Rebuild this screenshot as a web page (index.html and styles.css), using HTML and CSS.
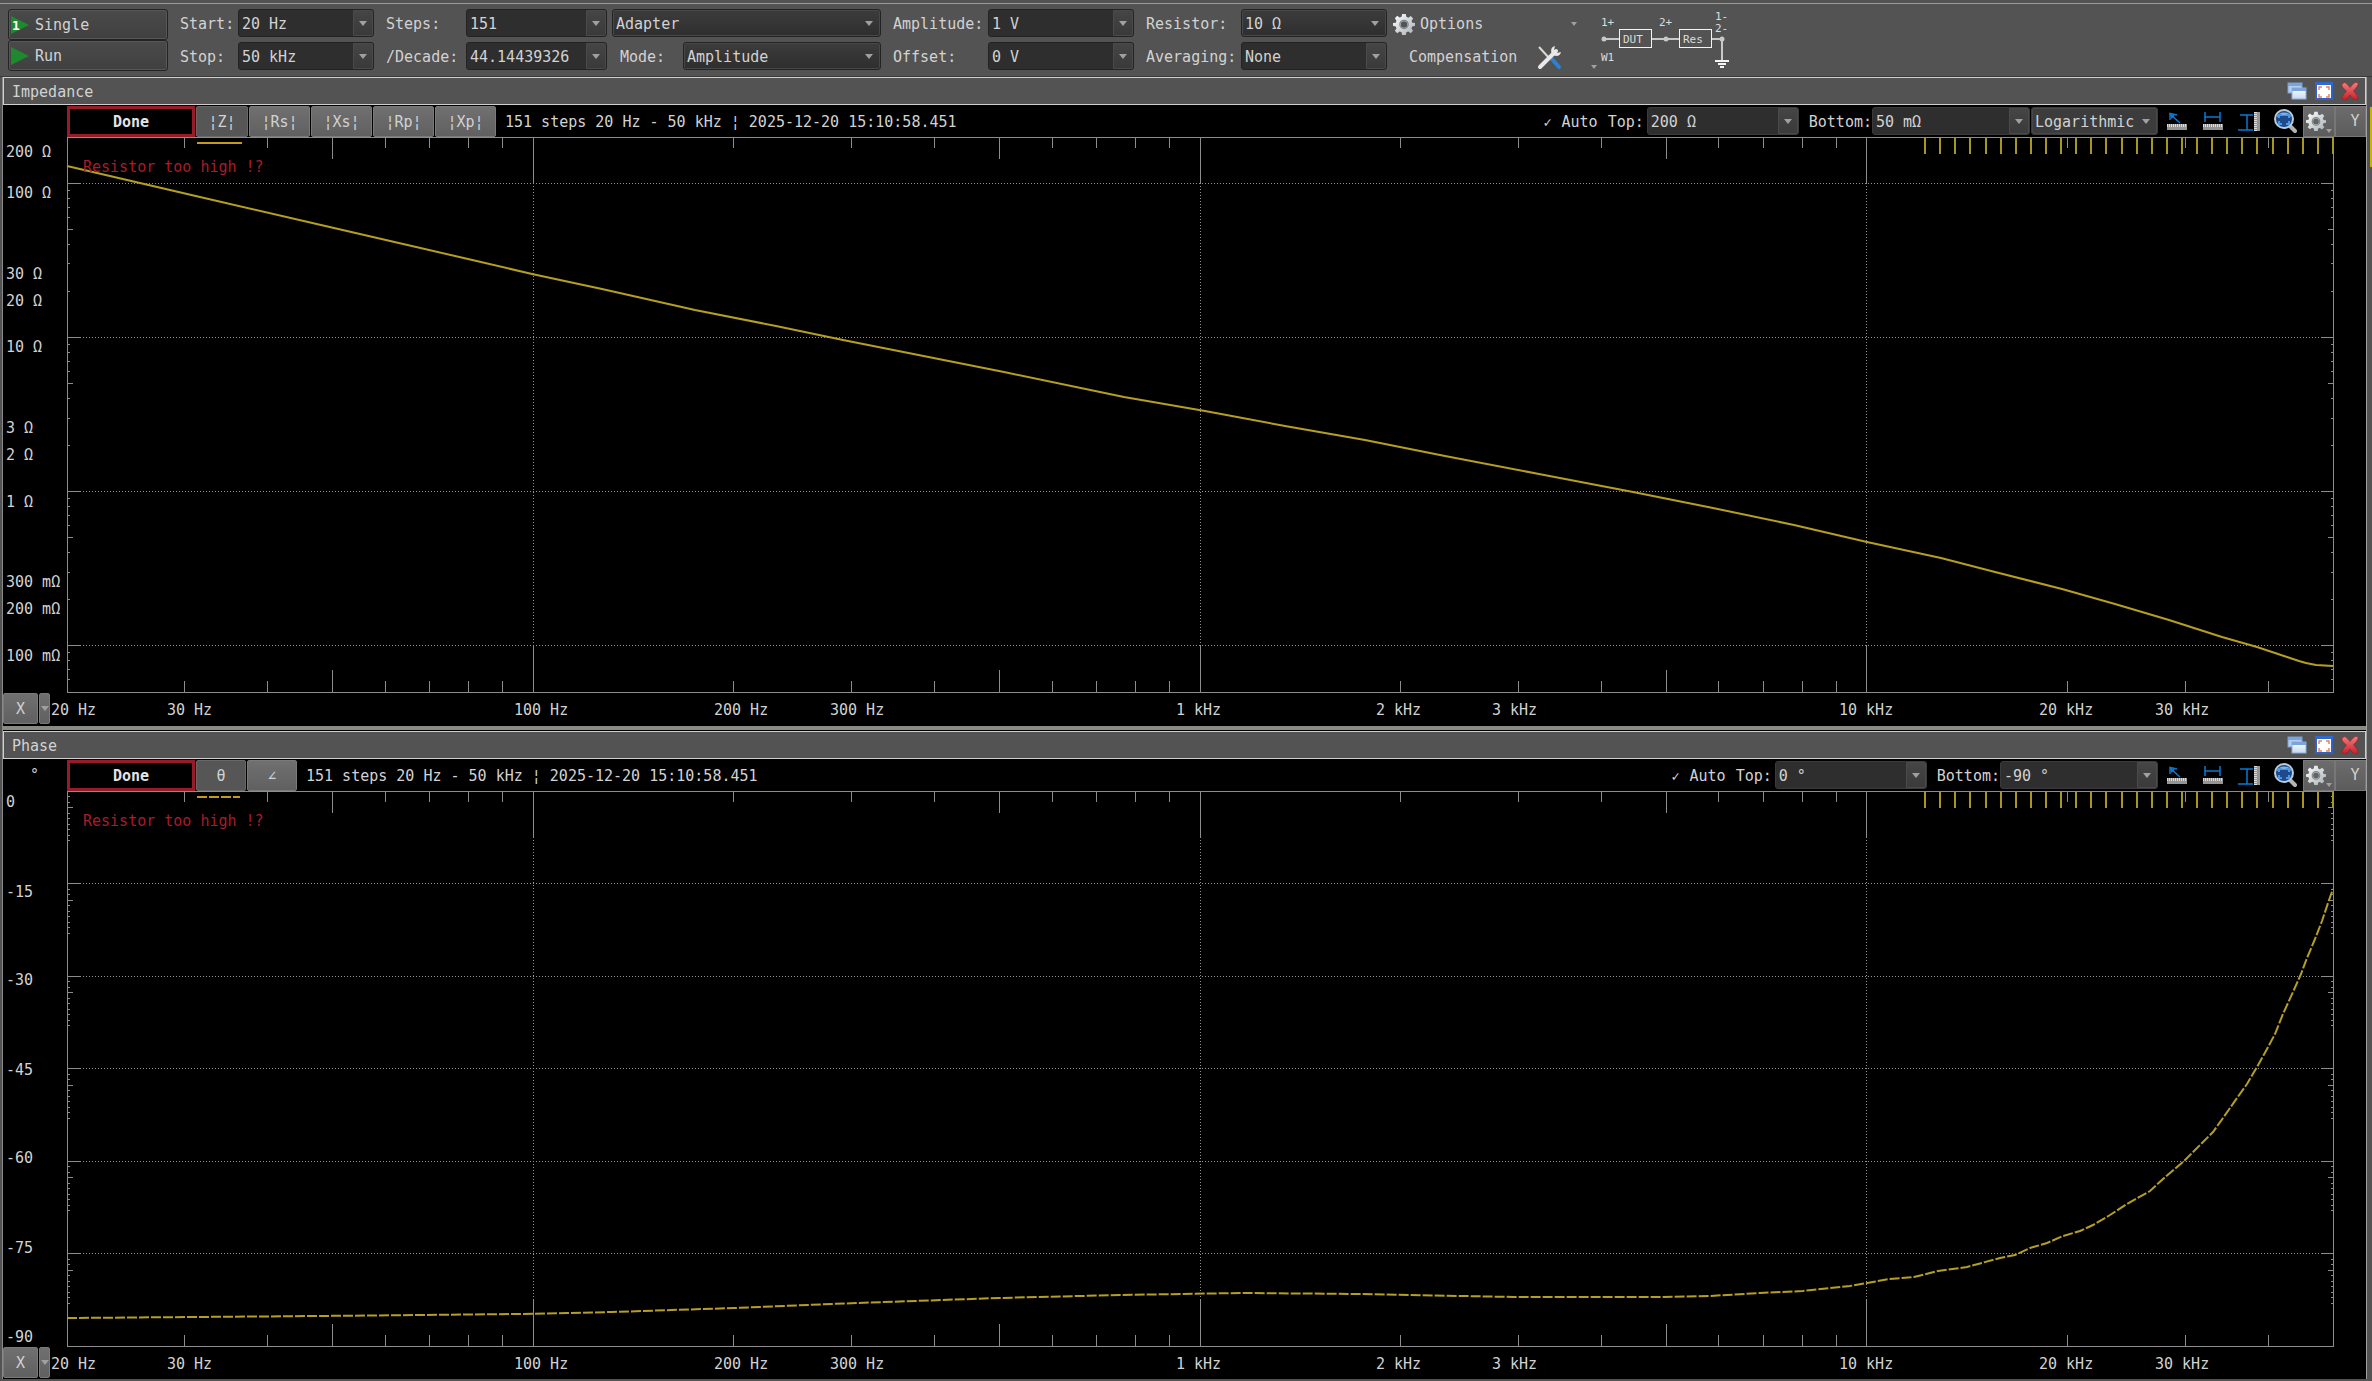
FILE: index.html
```
<!DOCTYPE html>
<html lang="en">
<head>
<meta charset="utf-8">
<title>Impedance Analyzer</title>
<link rel="stylesheet" href="styles.css">
</head>
<body>
<svg class="defs" aria-hidden="true">
  <defs>
    <linearGradient id="metal" x1="0" y1="0" x2="1" y2="1"><stop offset="0" stop-color="#ffffff"/><stop offset="1" stop-color="#a9b0b4"/></linearGradient>
    <linearGradient id="red" x1="0" y1="0" x2="0" y2="1"><stop offset="0" stop-color="#f08080"/><stop offset="1" stop-color="#c81e28"/></linearGradient>
    <linearGradient id="pane" x1="0" y1="0" x2="0" y2="1"><stop offset="0" stop-color="#ffffff"/><stop offset="1" stop-color="#c4d8f0"/></linearGradient>
    <symbol id="gear" viewBox="0 0 24 24">
      <path fill="url(#metal)" fill-rule="evenodd" d="M10 1h4l.6 3.200 2.100.9 2.700-1.900 2.600 2.800-1.800 2.600.9 2.100L24 11v3l-3 .7-.9 2.100 1.800 2.600-2.600 2.700-2.700-1.800-2 .8L14 24h-4l-.7-3-2-.8-2.700 1.800L2 19.400l1.800-2.600L3 14.700 0 14v-3l3-.5.800-2.100L2 5.800 4.600 3l2.700 2 2-.8zM12 9a3.500 3.500 0 1 0 0 7 3.500 3.500 0 0 0 0-7z"/>
      <circle cx="12" cy="12.500" r="4.500" fill="none" stroke="#7d868c" stroke-width="1.400"/>
    </symbol>
    <symbol id="restore" viewBox="0 0 20 18">
      <rect x="1" y="1" width="14" height="10" fill="#b4cbea" stroke="#7ba0d4"/>
      <rect x="1" y="1" width="14" height="3" fill="#7ba3dc"/>
      <rect x="5" y="6" width="14" height="11" fill="url(#pane)" stroke="#8fb0dc"/>
      <rect x="5" y="6" width="14" height="3" fill="#7ba3dc"/>
    </symbol>
    <symbol id="maximize" viewBox="0 0 18 18">
      <rect x="1" y="1" width="16" height="16" fill="#ffffff" stroke="#2f62c4" stroke-width="2"/>
      <rect x="0" y="0" width="18" height="3" fill="#2f6ad0"/>
      <path d="M4 8V5h3M11 5h3v3M14 12v3h-3M7 15H4v-3" fill="none" stroke="#e8825c" stroke-width="1.500"/>
    </symbol>
    <symbol id="close" viewBox="0 0 18 18">
      <path d="M1 2q3-3 5 0l3 3.500L12 2q3-3 5-1 1 2-4.500 8 5 5 4.500 8-2 2-5 0l-3-4-3 4q-3 2-5 0Q0 15 5.500 9 0 5 1 2z" fill="url(#red)" stroke="#a01820" stroke-width=".6"/>
    </symbol>
    <symbol id="cursor" viewBox="0 0 20 20">
      <path d="M3 3l10 9M3 9V2.500L10 4" fill="none" stroke="#0a78d0" stroke-width="1.500"/>
      <path d="M3 3l5 1.500L4.500 8z" fill="#0a78d0"/>
      <rect x="0" y="13" width="20" height="6" fill="#959595"/>
      <path d="M0 14.500h20" stroke="#dcdcdc" stroke-width="3" stroke-dasharray="1 1"/>
    </symbol>
    <symbol id="measure" viewBox="0 0 20 20">
      <path d="M2 1v10M17 1v10M2 6h15" fill="none" stroke="#0a78d0" stroke-width="1.500"/>
      <rect x="0" y="13" width="20" height="6" fill="#959595"/>
      <path d="M0 14.500h20" stroke="#dcdcdc" stroke-width="3" stroke-dasharray="1 1"/>
    </symbol>
    <symbol id="measure-y" viewBox="0 0 22 20">
      <path d="M2 4h13M0 19h15M9 4v15" fill="none" stroke="#0a78d0" stroke-width="1.500"/>
      <rect x="16" y="1" width="6" height="19" fill="#959595"/>
      <path d="M17.500 1v19" stroke="#dcdcdc" stroke-width="3" stroke-dasharray="1 1"/>
    </symbol>
    <symbol id="zoom" viewBox="0 0 24 24">
      <path d="M16 16l6 6" stroke="#b5b5b0" stroke-width="4" stroke-linecap="round"/>
      <circle cx="11" cy="10" r="9" fill="#1d4a8c" stroke="#b9cbd6" stroke-width="2"/>
      <path d="M3.500 8a8 7 0 0 1 15 0q-7-3-15 0z" fill="#7fb0e4"/>
      <path d="M6 9V6h3M13 6h3v3M16 12v3h-3M9 15H6v-3" fill="none" stroke="#4d97e6" stroke-width="2"/>
    </symbol>
  </defs>
</svg>

<div class="app">
  <form class="toolbar">
    <div class="run-buttons">
      <button type="button" class="run"><svg class="run-icon" viewBox="0 0 18 20"><path d="M0 1v18l18-9z" fill="#1e8a30"/><text x="1" y="15" class="run-one">1</text></svg>Single</button>
      <button type="button" class="run"><svg class="run-icon" viewBox="0 0 18 20"><path d="M0 1v18l18-9z" fill="#1e8a30"/></svg>Run</button>
    </div>
    <div class="fields fields-sweep">
      <label for="start">Start:</label>
      <div class="combo"><input id="start" value="20 Hz"><button type="button" aria-label="Start values"></button></div>
      <label for="stop">Stop:</label>
      <div class="combo"><input id="stop" value="50 kHz"><button type="button" aria-label="Stop values"></button></div>
    </div>
    <div class="fields fields-steps">
      <label for="steps">Steps:</label>
      <div class="combo"><input id="steps" value="151"><button type="button" aria-label="Step values"></button></div>
      <label for="decade">/Decade:</label>
      <div class="combo"><input id="decade" value="44.14439326"><button type="button" aria-label="Per decade values"></button></div>
    </div>
    <div class="fields fields-mode">
      <div class="drop wide"><select aria-label="Connection"><option>Adapter</option></select></div>
      <label for="mode">Mode:</label>
      <div class="drop"><select id="mode"><option>Amplitude</option></select></div>
    </div>
    <div class="fields fields-level">
      <label for="amplitude">Amplitude:</label>
      <div class="combo"><input id="amplitude" value="1 V"><button type="button" aria-label="Amplitude values"></button></div>
      <label for="offset">Offset:</label>
      <div class="combo"><input id="offset" value="0 V"><button type="button" aria-label="Offset values"></button></div>
    </div>
    <div class="fields fields-level">
      <label for="resistor">Resistor:</label>
      <div class="drop"><select id="resistor"><option>10 Ω</option></select></div>
      <label for="averaging">Averaging:</label>
      <div class="combo"><input id="averaging" value="None"><button type="button" aria-label="Averaging values"></button></div>
    </div>
    <div class="extras">
      <button type="button" class="flat options"><svg width="22" height="22"><use href="#gear"/></svg>Options<i class="arrow"></i></button>
      <button type="button" class="flat compensation">Compensation
        <svg width="26" height="26" viewBox="0 0 26 26"><path d="M2 3l11 12" stroke="#d8d8d8" stroke-width="2"/><path d="M14 14l8 9" stroke="#2f80d0" stroke-width="4" stroke-linecap="round"/><path d="M3 23L19 7" stroke="#e8e8e8" stroke-width="4" stroke-linecap="round"/><path d="M18 2a5 5 0 1 0 6 6l-4 1-3-3z" fill="#e8e8e8"/></svg>
        <i class="arrow low"></i></button>
    </div>
    <svg class="wiring" width="140" height="66" viewBox="0 6 140 66" role="img" aria-label="Wiring: W1 and 1+ to DUT, 2+, resistor, ground">
      <g fill="none" stroke="#c8c8c8" stroke-width="2">
        <path d="M4 36h15M51 36h28M111 36h11M122 36v21"/>
      </g>
      <g fill="none" stroke="#f4f4f4" stroke-width="1">
        <rect x="19.500" y="26.500" width="32" height="18"/><rect x="79.500" y="26.500" width="32" height="18"/>
      </g>
      <path d="M115 58h14M118 61h8M120 64h4" stroke="#f4f4f4" stroke-width="2"/>
      <g fill="#c8c8c8"><circle cx="4" cy="36" r="2.500"/><circle cx="66" cy="36" r="2.500"/><circle cx="122" cy="36" r="2.500"/></g>
      <g class="wiring-text">
        <text x="1" y="23">1+</text><text x="1" y="58">W1</text><text x="59" y="23">2+</text>
        <text x="23" y="40">DUT</text><text x="83" y="40">Res</text><text x="115" y="17">1-</text><text x="115" y="29">2-</text>
      </g>
    </svg>
  </form>

  <div class="main">
    <div class="panels">
      <section class="panel">
        <header class="title"><h2>Impedance</h2>
          <button type="button" aria-label="Restore"><svg width="20" height="18"><use href="#restore"/></svg></button>
          <button type="button" aria-label="Maximize"><svg width="18" height="18"><use href="#maximize"/></svg></button>
          <button type="button" aria-label="Close"><svg width="18" height="18"><use href="#close"/></svg></button>
        </header>
        <div class="head">
          <span class="unit"></span>
          <strong class="state">Done</strong>
          <button type="button" class="trace modulus on">¦Z¦</button><button type="button" class="trace pair">¦Rs¦</button><button type="button" class="trace pair">¦Xs¦</button><button type="button" class="trace pair">¦Rp¦</button><button type="button" class="trace pair">¦Xp¦</button>
          <span class="info">151 steps 20 Hz - 50 kHz ¦ 2025-12-20 15:10:58.451</span>
          <label class="auto"><input type="checkbox" checked>Auto</label>
          <label for="z-top">Top:</label>
          <div class="combo top"><input id="z-top" value="200 Ω"><button type="button" aria-label="Top values"></button></div>
          <label for="z-bottom">Bottom:</label>
          <div class="combo bottom"><input id="z-bottom" value="50 mΩ"><button type="button" aria-label="Bottom values"></button></div>
          <div class="drop scale"><select aria-label="Scale"><option>Logarithmic</option></select></div>
          <div class="tools">
            <button type="button" aria-label="Cursor"><svg width="20" height="20"><use href="#cursor"/></svg></button>
            <button type="button" aria-label="X measure"><svg width="20" height="20"><use href="#measure"/></svg></button>
            <button type="button" aria-label="Y measure"><svg width="22" height="20"><use href="#measure-y"/></svg></button>
            <button type="button" aria-label="Zoom"><svg width="24" height="24"><use href="#zoom"/></svg></button>
            <button type="button" class="raised" aria-label="Settings"><svg width="20" height="20"><use href="#gear"/></svg><i class="arrow"></i></button>
            <button type="button" class="raised y">Y</button>
          </div>
        </div>
        <div class="plot">
          <svg data-chart="impedance" role="img" aria-label="Impedance against frequency"></svg>
          <div class="x-buttons"><button type="button">X</button><button type="button" class="narrow" aria-label="X options"><i class="arrow"></i></button></div>
        </div>
      </section>
      <div class="splitter"></div>
      <section class="panel">
        <header class="title"><h2>Phase</h2>
          <button type="button" aria-label="Restore"><svg width="20" height="18"><use href="#restore"/></svg></button>
          <button type="button" aria-label="Maximize"><svg width="18" height="18"><use href="#maximize"/></svg></button>
          <button type="button" aria-label="Close"><svg width="18" height="18"><use href="#close"/></svg></button>
        </header>
        <div class="head">
          <span class="unit">°</span>
          <strong class="state">Done</strong>
          <button type="button" class="trace first on">θ</button><button type="button" class="trace first">∠</button>
          <span class="info">151 steps 20 Hz - 50 kHz ¦ 2025-12-20 15:10:58.451</span>
          <label class="auto"><input type="checkbox" checked>Auto</label>
          <label for="p-top">Top:</label>
          <div class="combo top"><input id="p-top" value="0 °"><button type="button" aria-label="Top values"></button></div>
          <label for="p-bottom">Bottom:</label>
          <div class="combo bottom"><input id="p-bottom" value="-90 °"><button type="button" aria-label="Bottom values"></button></div>
          <div class="tools">
            <button type="button" aria-label="Cursor"><svg width="20" height="20"><use href="#cursor"/></svg></button>
            <button type="button" aria-label="X measure"><svg width="20" height="20"><use href="#measure"/></svg></button>
            <button type="button" aria-label="Y measure"><svg width="22" height="20"><use href="#measure-y"/></svg></button>
            <button type="button" aria-label="Zoom"><svg width="24" height="24"><use href="#zoom"/></svg></button>
            <button type="button" class="raised" aria-label="Settings"><svg width="20" height="20"><use href="#gear"/></svg><i class="arrow"></i></button>
            <button type="button" class="raised y">Y</button>
          </div>
        </div>
        <div class="plot">
          <svg data-chart="phase" role="img" aria-label="Phase against frequency"></svg>
          <div class="x-buttons"><button type="button">X</button><button type="button" class="narrow" aria-label="X options"><i class="arrow"></i></button></div>
        </div>
      </section>
    </div>
    <aside class="side"></aside>
  </div>
</div>
<script src="plot.js"></script>
</body>
</html>
```
FILE: styles.css
```
* { box-sizing: border-box; }

:root {
  --bg: #535353;
  --field: #2e2e2e;
  --edge: #232323;
  --text: #d2d2d2;
  --line: #8c8c8c;
  --yellow: #b59f22;
}

body {
  margin: 0;
  background: var(--bg);
  color: var(--text);
}

body, button, input, select {
  font: 15px/20px "DejaVu Sans Mono", monospace;
}

button, input, select {
  margin: 0;
  padding: 0;
  border: 0;
  color: inherit;
  background: none;
  border-radius: 0;
}

label { white-space: pre; padding-top: 2px; }
svg { display: block; flex: none; }
.defs { position: absolute; width: 0; height: 0; }

.app {
  display: flex;
  flex-direction: column;
  height: 100vh;
  min-height: 600px;
  padding-bottom: 2px;
}

/* toolbar */
.toolbar {
  display: flex;
  margin-top: 3px;
  padding: 5px 8px 0;
  height: 74px;
  border-top: 1px solid #9a9a9a;
  border-bottom: 1px solid #3a3a3a;
}

.run-buttons {
  display: flex;
  flex-direction: column;
  width: 160px;
}

.run {
  display: flex;
  align-items: center;
  gap: 6px;
  height: 31px;
  padding: 1px 2px 0;
  border: 1px solid var(--edge);
  border-radius: 3px;
  background: linear-gradient(#4a4a4a, #404040);
  box-shadow: inset 0 0 0 1px #575757;
}

.run-icon { width: 18px; height: 20px; }
.run-one { font: bold 13px "DejaVu Sans Mono", monospace; fill: #fff; }

.fields {
  display: grid;
  grid-template-rows: 28px 28px;
  row-gap: 5px;
  align-items: center;
  margin-left: 12px;
  height: 61px;
}

.fields-sweep { grid-template-columns: 58px 136px; }
.fields-steps { grid-template-columns: 80px 141px; }
.fields-mode { grid-template-columns: 63px 198px; margin-left: 5px; padding-left: 8px; }
.fields-mode .wide { grid-column: 1 / 3; margin-left: -8px; }
.fields-level { grid-template-columns: 95px 146px; }

.combo, .drop {
  display: flex;
  height: 28px;
  border: 1px solid var(--edge);
  border-radius: 3px;
  background: var(--field);
}

.combo input {
  flex: 1;
  min-width: 0;
  padding: 2px 0 0 3px;
}

.combo button {
  display: flex;
  align-items: center;
  justify-content: center;
  width: 20px;
  border: 1px solid #4a4a4a;
  border-radius: 0 2px 2px 0;
  background: linear-gradient(#454545, #3a3a3a);
}

.combo button::after, .drop::after, .arrow {
  content: "";
  border: 4px solid transparent;
  border-top: 5px solid #a0a0a0;
  border-bottom: 0;
}

.drop {
  align-items: center;
  padding-right: 7px;
  background: linear-gradient(#3c3c3c, #2e2e2e);
  box-shadow: inset 0 0 0 1px #484848;
}

.drop select {
  flex: 1;
  min-width: 0;
  height: 26px;
  padding: 2px 0 0 3px;
  appearance: none;
}

.extras {
  display: flex;
  flex-direction: column;
  gap: 4px;
  width: 207px;
  margin-left: 6px;
}

.flat {
  display: flex;
  align-items: center;
  height: 29px;
  text-align: left;
}

.options { gap: 5px; padding-right: 23px; }
.options .arrow { margin-left: auto; }
.compensation { padding: 0 3px 0 16px; gap: 20px; }
.compensation .low { margin: 20px 0 0 auto; }
.wiring-text { font: 11px "DejaVu Sans Mono", monospace; fill: #dcdcdc; }
.arrow { flex: none; width: 8px; height: 5px; border-width: 5px 4px 0; }
.flat .arrow { border-width: 4px 3px 0; width: 6px; height: 4px; }

/* panels */
.main {
  display: flex;
  flex: 1;
  min-height: 0;
}

.panels {
  display: grid;
  grid-template-rows: 1fr 6px 1fr;
  flex: 1;
  min-width: 0;
  margin-left: 2px;
  border-left: 1px solid #8a8a8a;
}

.panel {
  display: flex;
  flex-direction: column;
  min-height: 0;
  background: #000;
}

.splitter {
  background: #8a8a85;
  border-top: 1px solid #000;
  border-bottom: 1px solid #000;
}

.title {
  display: flex;
  align-items: center;
  gap: 8px;
  height: 28px;
  padding: 0 6px 0 8px;
  border: 1px solid #cfcfcf;
  background: var(--bg);
}

.title h2 { flex: 1; margin: 0; padding-top: 2px; font: inherit; }

.head {
  display: flex;
  align-items: center;
  height: 32px;
}

.unit { width: 64px; padding-left: 27px; line-height: 12px; }

.state {
  width: 128px;
  height: 31px;
  border: 3px solid #951c28;
  text-align: center;
  line-height: 26px;
  color: #e4e4e4;
}

.trace {
  height: 31px;
  margin-left: 1px;
  padding-top: 1px;
  border: 1px solid #7a7a7a;
  border-radius: 2px;
  background: linear-gradient(#707070, #606060);
}

.trace.first { width: 50px; }
.trace.modulus { width: 52px; }
.trace.pair { width: 61px; }
.trace.on { background: #565656; border-color: #686868; }
.info { flex: 1; padding: 2px 0 0 9px; white-space: nowrap; }

.auto { display: flex; align-items: center; gap: 8px; margin-right: 10px; }

.auto input { appearance: none; width: 10px; height: 20px; }
.auto input:checked::before { content: "✓"; font-size: 14px; font-weight: bold; }

.head .combo, .head .drop { border-color: #3a3a3a; }
.head .top { width: 152px; margin: 0 10px 0 3px; }
.head .bottom { width: 158px; margin: 0 1px 0 0; }
.head .drop { width: 127px; margin-right: 1px; background: #3c3c3c; }

.tools { display: flex; height: 31px; }
.tools button { display: flex; align-items: center; justify-content: center; width: 36px; }
.tools .raised {
  width: 32px;
  border: 1px solid #777;
  background: linear-gradient(#6c6c6c, #5c5c5c);
}
.tools .raised .arrow { width: 6px; height: 4px; margin: 20px 0 0 0; border-width: 4px 3px 0; }
.tools .y { width: 31px; padding-left: 9px; }

.plot { position: relative; flex: 1; min-height: 0; }
.plot > svg { width: 100%; height: 100%; }

.x-buttons {
  position: absolute;
  left: 0;
  bottom: 1px;
  display: flex;
  gap: 1px;
}

.x-buttons button {
  display: flex;
  align-items: center;
  justify-content: center;
  width: 35px;
  height: 31px;
  border: 1px solid #7a7a7a;
  border-radius: 2px;
  background: linear-gradient(#707070, #606060);
}

.x-buttons .narrow { width: 11px; }

.side {
  width: 6px;
  border-left: 1px solid #a0a0a0;
  background: linear-gradient(#c8b400, #c8b400) 3px 30px / 3px 60px no-repeat;
}

/* chart parts */
.axis { fill: none; stroke: var(--line); stroke-width: 1; shape-rendering: crispEdges; }
.grid { fill: none; stroke: #949494; stroke-width: 1; stroke-dasharray: 1 2; shape-rendering: crispEdges; }
.samples { stroke: #a89522; stroke-width: 2; shape-rendering: crispEdges; }
.curve { fill: none; stroke: var(--yellow); stroke-width: 2; }
.curve.dashed, .key.dashed { stroke-dasharray: 10 2; }
.key { stroke: #c49c1c; stroke-width: 2; }
.tick-text { font: 15px "DejaVu Sans Mono", monospace; fill: var(--text); }
.warning { font: 15px "DejaVu Sans Mono", monospace; fill: #a81c2c; }
```
FILE: plot.js
```
const PAD = { left: 64, right: 33, bottom: 33 };
const F_MIN = 20, F_MAX = 50000, STEPS = 151;

const X_LABELS = [
  [20, "20 Hz"], [30, "30 Hz"], [100, "100 Hz"], [200, "200 Hz"], [300, "300 Hz"],
  [1000, "1 kHz"], [2000, "2 kHz"], [3000, "3 kHz"],
  [10000, "10 kHz"], [20000, "20 kHz"], [30000, "30 kHz"]
];

const logPos = (v, lo, hi) => Math.log(v / lo) / Math.log(hi / lo);

function impedanceTicks() {
  const ticks = [];
  for (let decade = 0.01; decade < 200; decade *= 10) {
    for (let n = 1; n < 10; n++) {
      const v = decade * n;
      if (v > 0.0501 && v < 199) {
        ticks.push({ pos: 1 - logPos(v, 0.05, 200), size: n === 1 ? 12 : n === 5 ? 5 : 2, grid: n === 1 });
      }
    }
  }
  return ticks;
}

function phaseTicks() {
  const ticks = [];
  for (let major = 0; major < 6; major++) {
    if (major) ticks.push({ pos: major / 6, size: 12, grid: true });
    for (let n = 1; n < 10; n++) {
      ticks.push({ pos: (major * 15 + n * 0.9) / 90, size: n === 3 ? 5 : 2, grid: false });
    }
  }
  return ticks;
}

// Traces are sampled on a 2266 x 555 grid and scaled to the plot.
const SPACE = [2266, 555];

const CHARTS = {
  impedance: {
    dashed: false,
    ticks: impedanceTicks(),
    labels: [[200, "200 Ω"], [100, "100 Ω"], [30, "30 Ω"], [20, "20 Ω"], [10, "10 Ω"], [3, "3 Ω"], [2, "2 Ω"],
      [1, "1 Ω"], [0.3, "300 mΩ"], [0.2, "200 mΩ"], [0.1, "100 mΩ"]]
      .map(([v, text]) => ({ pos: 1 - logPos(v, 0.05, 200), text, dy: v === 200 ? 20 : 15 })),
    trace: [[0, 29], [133, 60], [267, 91], [401, 122], [465, 137], [535, 152], [628, 173], [709, 189], [776, 203],
      [937, 235], [1057, 260], [1138, 274], [1218, 289], [1298, 303], [1378, 319], [1472, 337], [1566, 355],
      [1646, 371], [1727, 388], [1800, 405], [1874, 421], [1928, 435], [1995, 452], [2048, 467], [2102, 483],
      [2155, 500], [2190, 510], [2220, 520], [2232, 524], [2239, 526], [2249, 528], [2266, 529]]
  },
  phase: {
    dashed: true,
    ticks: phaseTicks(),
    labels: [0, 1, 2, 3, 4, 5, 6].map(n => ({ pos: n / 6, text: n ? "-" + n * 15 : "0", dy: Math.round(16 - 3.4 * n) })),
    trace: [[0, 527], [128, 526], [250, 525], [356, 524], [450, 523], [500, 522], [545, 521], [667, 517], [789, 512],
      [932, 507], [1053, 504], [1174, 502], [1295, 503], [1446, 506], [1597, 506], [1643, 505], [1693, 502],
      [1736, 500], [1763, 497], [1783, 495], [1800, 492], [1822, 488], [1847, 486], [1871, 480], [1900, 476],
      [1933, 467], [1948, 464], [1963, 457], [1980, 452], [1996, 445], [2013, 440], [2026, 434], [2043, 424],
      [2060, 413], [2083, 400], [2096, 388], [2116, 371], [2133, 354], [2146, 341], [2156, 327], [2170, 307],
      [2180, 293], [2190, 276], [2200, 258], [2208, 243], [2216, 223], [2226, 201], [2234, 183], [2240, 167],
      [2248, 148], [2255, 130], [2261, 112], [2266, 98]]
  }
};

function draw(svg) {
  const chart = CHARTS[svg.dataset.chart];
  const left = PAD.left, right = svg.clientWidth - PAD.right;
  const bottom = svg.clientHeight - PAD.bottom, w = right - left, h = bottom;
  const x = f => left + logPos(f, F_MIN, F_MAX) * w;
  const snap = v => Math.floor(v) + 0.5;
  let axis = "", grid = "", samples = "", text = "";

  for (let decade = 10; decade <= 10000; decade *= 10) {
    for (let n = 1; n < 10; n++) {
      const f = decade * n;
      if (f <= F_MIN || f >= F_MAX) continue;
      const px = snap(x(f)), size = n === 1 ? 46 : n === 5 ? 22 : 11;
      axis += `M${px} 0v${size}M${px} ${bottom}v${-size}`;
      if (n === 1) grid += `M${px} 46V${bottom - 46}`;
    }
  }
  for (const t of chart.ticks) {
    const py = snap(t.pos * h);
    axis += `M${left} ${py}h${t.size + 1}M${right} ${py}h${-t.size}`;
    if (t.grid) grid += `M${left + 13} ${py}H${right - 12}`;
  }
  for (let k = 0; k < 28; k++) samples += `M${Math.round(right - k * w / (STEPS - 1))} 0v17`;

  for (const l of chart.labels) text += `<text x="3" y="${Math.round(l.pos * h) + l.dy}">${l.text}</text>`;
  for (const [f, s] of X_LABELS) {
    const dx = Math.round(16 + 15 * logPos(f, F_MIN, F_MAX));
    text += `<text x="${Math.round(x(f)) - dx}" y="${bottom + 23}">${s}</text>`;
  }

  const points = chart.trace.map(([a, b]) => (left + a / SPACE[0] * w).toFixed(1) + "," + (b / SPACE[1] * h).toFixed(1)).join(" ");
  const dash = chart.dashed ? " dashed" : "";
  svg.innerHTML =
    `<path class="grid" d="${grid}"/>
     <path class="axis" d="M${left + 0.5} ${bottom + 0.5}V0.5H${right + 0.5}V${bottom + 0.5}z${axis}"/>
     <path class="samples" d="${samples}"/>
     <path class="key${dash}" d="M${left + 130} 6h${chart.dashed ? 43 : 45}"/>
     <polyline class="curve${dash}" points="${points}"/>
     <g class="tick-text">${text}</g>
     <text class="warning" x="80" y="35">Resistor too high !?</text>`;
}

const observer = new ResizeObserver(entries => entries.forEach(e => draw(e.target)));
document.querySelectorAll("svg[data-chart]").forEach(svg => { draw(svg); observer.observe(svg); });
```
